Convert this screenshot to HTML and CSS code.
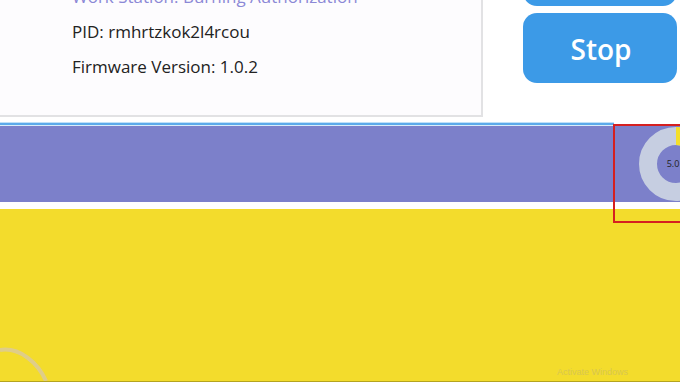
FILE: index.html
```html
<!DOCTYPE html>
<html lang="en">
<head>
<meta charset="UTF-8">
<meta name="viewport" content="width=device-width, initial-scale=1.0">
<title>Burning Authorization</title>
<link rel="stylesheet" href="styles.css">
</head>
<body>
<div class="top">
    <div class="card">
        <p class="station">Work Station: Burning Authorization</p>
        <p>PID: rmhrtzkok2l4rcou</p>
        <p>Firmware Version: 1.0.2</p>
    </div>
    <div class="buttons">
        <button class="btn">Start</button>
        <button class="btn">Stop</button>
    </div>
</div>
<div class="rule"></div>
<div class="band">
    <svg class="gauge" width="74" height="74" viewBox="0 0 74 74">
        <circle cx="37" cy="37" r="28" fill="none" stroke="#c6cee1" stroke-width="18"/>
        <circle cx="37" cy="37" r="28" fill="none" stroke="#f4df2a" stroke-width="18"
                stroke-dasharray="8 200" transform="rotate(-90 37 37)"/>
        <text x="34" y="40" text-anchor="middle" font-size="9" font-family="Open Sans, sans-serif" fill="#222">5.0</text>
    </svg>
</div>
<div class="yellow">
    <svg class="arc" width="80" height="40" viewBox="0 0 80 40">
        <path d="M0 9 C 20 6, 38 22, 46 40" fill="none" stroke="#d9c9a0" stroke-width="4" opacity="0.8"/>
    </svg>
    <span class="watermark">Activate Windows</span>
</div>
<div class="highlight"></div>
</body>
</html>
```

FILE: styles.css
```css
body {
    margin: 0;
    background-color: #fff;
    font-family: 'Open Sans', 'Noto Sans', sans-serif;
    overflow: hidden;
    height: 382px;
    position: relative;
}
.top {
    display: flex;
    height: 118px;
    overflow: hidden;
}
.card {
    width: 483px;
    margin-top: -21px;
    height: 138px;
    box-sizing: border-box;
    padding-left: 72px;
    background-color: #fdfcfe;
    border-right: 2px solid #e2e2e4;
    border-bottom: 2px solid #e2e2e4;
}
.card p {
    margin: 0;
    height: 35px;
    line-height: 35px;
    font-size: 17px;
    color: #222;
}
.card .station {
    color: #8b88d6;
    font-size: 17px;
}
.buttons {
    margin-left: 40px;
    margin-top: -64px;
    display: flex;
    flex-direction: column;
    gap: 7px;
}
.btn {
    width: 154px;
    height: 70px;
    border: none;
    border-radius: 14px;
    background-color: #3c9ae7;
    color: #fff;
    font-family: 'Open Sans', sans-serif;
    font-weight: 600;
    font-size: 28px;
    padding-top: 2px;
    padding-left: 8px;
}
.rule {
    margin-top: 4px;
    width: 614px;
    height: 2px;
    background-color: #5caaea;
    border-top: 1px solid #bfe0f8;
    border-bottom: 1px solid #d8ecfa;
}
.band {
    height: 76px;
    background-color: #7c80ca;
    display: flex;
    justify-content: flex-end;
    align-items: center;
}
.gauge {
    margin-right: -33px;
    flex-shrink: 0;
}
.yellow {
    margin-top: 7px;
    height: 173px;
    box-sizing: border-box;
    background-color: #f3dc2c;
    border-bottom: 1px solid #b5a41f;
    position: relative;
}
.arc {
    position: absolute;
    left: 0;
    bottom: 0;
}
.watermark {
    position: absolute;
    right: 52px;
    bottom: 4px;
    font-family: 'Liberation Sans', sans-serif;
    font-size: 9px;
    color: #d8c650;
}
.highlight {
    position: absolute;
    left: 613px;
    top: 124px;
    width: 80px;
    height: 95px;
    border: 2px solid #d52020;
}
```
